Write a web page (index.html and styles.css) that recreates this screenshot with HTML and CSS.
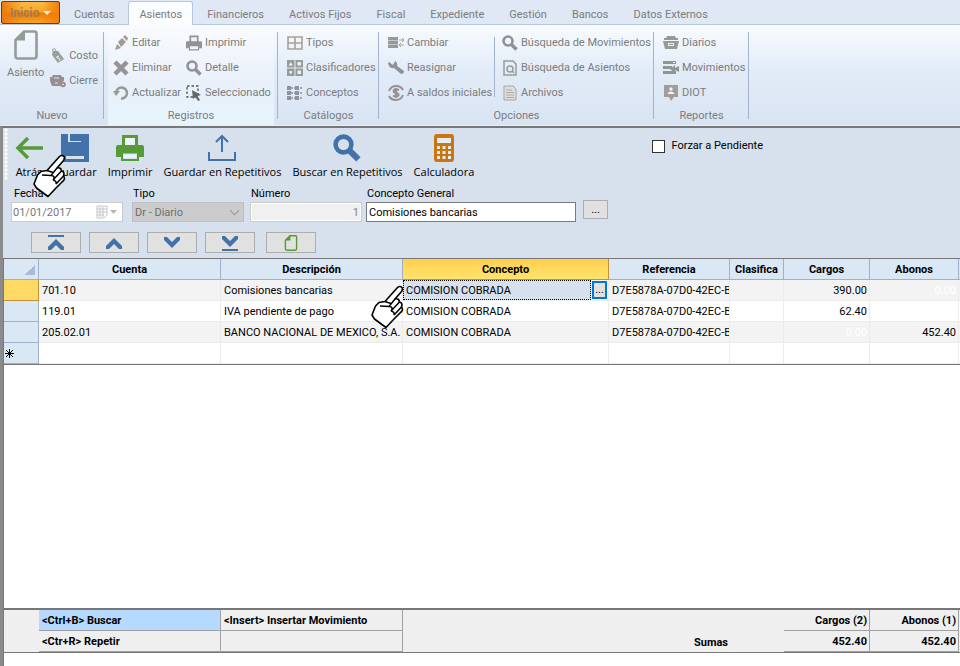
FILE: index.html
```
<!DOCTYPE html>
<html lang="es">
  <head>
    <meta charset="UTF-8" />
    <meta name="viewport" content="width=device-width, initial-scale=1.0" />
    <title>Asientos</title>
    <link rel="stylesheet" href="styles.css">
  </head>
  <body>
    <svg class="defs" aria-hidden="true">
      <symbol id="search" viewBox="0 0 16 16"><circle cx="6" cy="6" r="4.500" fill="none" stroke="currentColor" stroke-width="2.600"/><path d="M9 9L14.500 14.500" stroke="currentColor" stroke-width="3.500"/></symbol>
      <symbol id="sheet" viewBox="0 0 24 30"><path d="M10 1.500H20.500Q22.500 1.500 22.500 3.500V26Q22.500 28.500 20 28.500H4Q1.500 28.500 1.500 26V10Z" fill="none" stroke="currentColor" stroke-width="2.600"/><path d="M11 1V10.500H1Z" fill="currentColor"/></symbol>
      <symbol id="printer" viewBox="0 0 28 28"><path d="M6 1H22V11H26Q28 11 28 13V23H23V18H5V23H0V13Q0 11 2 11H6Z" fill="currentColor"/><path d="M9 4H19V11H9ZM8 20.500H20V24H8Z" fill="#eef3f9"/><path d="M6 18.500H22V26H6Z" fill="none" stroke="currentColor" stroke-width="2"/></symbol>
      <symbol id="hand" viewBox="0 0 34 44"><path d="M14 16.500L26.500 2.500Q29 .5 31 2.500Q32 4.500 30.500 6.500L24 14Q28 13 28.500 17Q32 18 30.500 22Q33 25 29 28L23 34L15 42.500L3.500 34L1 30L4.500 21L8 17.500Z" fill="#fff" stroke="#000" stroke-width="1.600" stroke-linejoin="round"/><path d="M9 21L18 21.500L24 14M18 21.500Q23 22 20 26L28.500 17M20 26Q24 27 23 30L30.500 22M14 16.500L20 18.500" fill="none" stroke="#000" stroke-width="1.500"/></symbol>
    </svg>

    <nav class="tabs">
      <button class="start">Inicio <span class="arrow"></span></button>
      <a class="tab" href="#">Cuentas</a>
      <a class="tab active" href="#">Asientos</a>
      <a class="tab" href="#">Financieros</a>
      <a class="tab" href="#">Activos Fijos</a>
      <a class="tab" href="#">Fiscal</a>
      <a class="tab" href="#">Expediente</a>
      <a class="tab" href="#">Gestión</a>
      <a class="tab" href="#">Bancos</a>
      <a class="tab" href="#">Datos Externos</a>
    </nav>

    <div class="ribbon">
      <section class="group nuevo">
        <div class="group-body">
          <button class="big"><svg class="sheet-icon"><use href="#sheet"/></svg>Asiento</button>
          <div class="col middle">
            <button class="cmd"><svg viewBox="0 0 16 16"><path d="M3 3L8 3L14 11L8 15L2 7Z" fill="#999f99"/><path d="M4 5Q1 1 4 .8Q7 1 5 5" fill="none" stroke="#999f99"/><path d="M9 8L6.500 9Q7 11 9 10Q11 11 9 13" fill="none" stroke="#eef3f9"/></svg>Costo</button>
            <button class="cmd"><svg viewBox="0 0 16 16"><path d="M3 2H11L12 4H14V8H0V4H2ZM0 8H13V13H2Z" fill="#988f91"/><path d="M4 5H9M5 10H8" stroke="#e5e9f2"/><circle cx="13" cy="11.500" r="2.800" fill="#988f91"/><circle cx="13" cy="11.500" r=".8" fill="#fff"/></svg>Cierre</button>
          </div>
        </div>
        <h2>Nuevo</h2>
      </section>

      <section class="group registros">
        <div class="group-body">
          <div class="col">
            <button class="cmd"><svg viewBox="0 0 16 16"><path d="M2 15L4 9L8 13ZM5 7L9 3L13 7L8 12ZM10 2L12 0L15 3L14 6Z" fill="#a39a91"/></svg>Editar</button>
            <button class="cmd"><svg viewBox="0 0 16 16"><path d="M2 2L14 14M14 2L2 14" stroke="#969394" stroke-width="4.500"/></svg>Eliminar</button>
            <button class="cmd"><svg viewBox="0 0 16 16"><path d="M3 8A5.500 5.500 0 1 1 8 13.500" fill="none" stroke="#969b96" stroke-width="2.500"/><path d="M0 6H7L3 11Z" fill="#969b96"/></svg>Actualizar</button>
          </div>
          <div class="col">
            <button class="cmd"><svg><use href="#printer"/></svg>Imprimir</button>
            <button class="cmd"><svg><use href="#search"/></svg>Detalle</button>
            <button class="cmd"><svg viewBox="0 0 16 16"><path d="M1 1H12V12H1Z" fill="none" stroke="#555" stroke-width="1.300" stroke-dasharray="2.500 2"/><path d="M6 5L15 10L11.500 11L14 15L12 16L9.500 12L7 14Z" fill="#666"/></svg>Seleccionado</button>
          </div>
        </div>
        <h2>Registros</h2>
      </section>

      <section class="group catalogos">
        <div class="group-body">
          <div class="col">
            <button class="cmd"><svg viewBox="0 0 16 16"><path d="M1 2H15V14H1ZM8 2V14M1 8H15" fill="none" stroke="#aaa195" stroke-width="1.600"/></svg>Tipos</button>
            <button class="cmd"><svg viewBox="0 0 16 16"><path d="M0 0H7.500V7.500H0ZM8.500 0H16V7.500H8.500ZM0 8.500H7.500V16H0ZM8.500 8.500H16V16H8.500Z" fill="#969c98"/><path d="M3.800 2L6 5.500H1.600ZM2.500 11H5V13.500H2.500ZM10.500 10.500H14V14H10.500Z" fill="#edf2f8"/><circle cx="12.200" cy="3.800" r="2" fill="#edf2f8"/></svg>Clasificadores</button>
            <button class="cmd"><svg viewBox="0 0 16 16"><path d="M0 1H4V5H0ZM0 6H4V10H0ZM0 11H4V15H0ZM8 1H12V5H8ZM8 6H12V10H8ZM8 11H12V15H8Z" fill="#8e939b"/><path d="M4 3H16M4 8H16M4 13H16" stroke="#8e939b" stroke-width="1.500" stroke-dasharray="2 1"/></svg>Conceptos</button>
          </div>
        </div>
        <h2>Catálogos</h2>
      </section>

      <section class="group opciones">
        <div class="group-body">
          <div class="col">
            <button class="cmd"><svg viewBox="0 0 16 16"><path d="M0 2H10V5H0ZM0 5.500H10V9H0ZM0 9.500H10V13H0Z" fill="#999"/><path d="M11 5H16M14 3L16 5L14 7M16 10H11M13 8L11 10L13 12" fill="none" stroke="#aaa195"/></svg>Cambiar</button>
            <button class="cmd"><svg viewBox="0 0 16 16"><path d="M1 2L5 5L7 1Q10 3 9 6L16 11Q16 14 13 14L6 8Q1 9 0 3Z" fill="#8e9296"/></svg>Reasignar</button>
            <button class="cmd"><svg viewBox="0 0 16 16"><path d="M1 6Q3 1 8 1Q13 1 15 5M15 10Q13 15 8 15Q3 15 1 11M8 3V13M11 5Q6 3 5.500 6Q6 8 8 8Q11 8 10.500 10.500Q8 12.500 5 10.500" fill="none" stroke="#988f91" stroke-width="2"/></svg>A saldos iniciales</button>
          </div>
          <div class="col inner">
            <button class="cmd"><svg><use href="#search"/></svg>Búsqueda de Movimientos</button>
            <button class="cmd"><svg viewBox="0 0 16 16"><path d="M2 1H11L14 4V15H2Z" fill="none" stroke="#969d99" stroke-width="1.500"/><circle cx="8" cy="9" r="3" fill="none" stroke="#969d99" stroke-width="1.500"/><path d="M10 11L12 13" stroke="#969d99" stroke-width="1.500"/></svg>Búsqueda de Asientos</button>
            <button class="cmd"><svg viewBox="0 0 16 16"><path d="M2 1H11L14 4V15H2Z" fill="#dedede" stroke="#a5a5a5"/><path d="M4 5H10M4 7.500H12M4 10H12M4 12.500H12" stroke="#aaa"/></svg>Archivos</button>
          </div>
        </div>
        <h2>Opciones</h2>
      </section>

      <section class="group reportes">
        <div class="group-body">
          <div class="col">
            <button class="cmd"><svg viewBox="0 0 16 16"><path d="M4 1H12L13 3H15V5H1V3H3ZM0 6H16L14 14H2Z" fill="#969b96"/><path d="M5 8H11V11H5Z" fill="#e9eef5"/><path d="M6 9.500H10" stroke="#969b96"/></svg>Diarios</button>
            <button class="cmd"><svg viewBox="0 0 16 16"><path d="M0 1H13V4H0ZM0 6H9V9H0ZM0 11H13V14H0ZM7 9L12 5V8L16 6V12L12 10V13Z" fill="#909591"/><path d="M10 2.500H12" stroke="#fff"/></svg>Movimientos</button>
            <button class="cmd"><svg viewBox="0 0 16 16"><path d="M1 0H15V12H11L8 16L6 12H1Z" fill="#a09d9b"/><circle cx="8" cy="4" r="1.700" fill="#f1f3f7"/><path d="M4.500 9Q5 6.500 8 6.500Q11 6.500 11.500 9Z" fill="#f1f3f7"/></svg>DIOT</button>
          </div>
        </div>
        <h2>Reportes</h2>
      </section>
    </div>

    <main class="window">
      <svg class="hand hand-save" aria-hidden="true"><use href="#hand"/></svg>
      <div class="toolbar">
        <button class="tool"><svg viewBox="0 0 28 28"><path d="M28 14H3M13 4L3 14L13 24" fill="none" stroke="#559b38" stroke-width="3.500"/></svg>Atrás</button>
        <button class="tool"><svg viewBox="0 0 28 28"><path d="M0 0H28V28H0Z" fill="#4272a8"/><path d="M7 0H9V7H11V0H20V8H7ZM5 22H23V25H5Z" fill="#d7e1ee"/><path d="M11 0H20V7H11Z" fill="#4272a8"/></svg>Guardar</button>
        <button class="tool print"><svg><use href="#printer"/></svg>Imprimir</button>
        <button class="tool"><svg viewBox="0 0 28 28"><path d="M1 18V26H27V18M14 18V2M8 8L14 2L20 8" fill="none" stroke="#4272a8" stroke-width="2"/></svg>Guardar en Repetitivos</button>
        <button class="tool find"><svg><use href="#search"/></svg>Buscar en Repetitivos</button>
        <button class="tool"><svg viewBox="0 0 28 28"><rect x="4" width="20" height="28" rx="3" fill="#c87512"/><path d="M7 4H21V9H7Z" fill="#e9edf2"/><path d="M7 13.500H21M7 18.500H21M7 23.500H21" stroke="#e9edf2" stroke-width="2.800" stroke-dasharray="3 2.500"/></svg>Calculadora</button>
        <label class="check"><input type="checkbox"> Forzar a Pendiente</label>
      </div>

      <form class="fields">
        <div class="field fecha">
          <label for="fecha">Fecha</label>
          <div class="date-box">
            <input id="fecha" type="text" value="01/01/2017" disabled>
            <svg viewBox="0 0 22 14" aria-hidden="true"><path d="M1 1H11V10L8 13H1ZM1 4H11M1 7H11M1 10H8M4 2V12M7 2V12" fill="none" stroke="#c4c4c4"/><path d="M14 5H21L17.500 9Z" fill="#b5b8b2"/></svg>
          </div>
        </div>
        <div class="field tipo">
          <label for="tipo">Tipo</label>
          <select id="tipo" disabled><option>Dr - Diario</option></select>
        </div>
        <div class="field numero">
          <label for="numero">Número</label>
          <input id="numero" type="text" value="1" disabled>
        </div>
        <div class="field concepto">
          <label for="concepto">Concepto General</label>
          <input id="concepto" type="text" value="Comisiones bancarias">
        </div>
        <button class="more" type="button" aria-label="Buscar concepto">...</button>
      </form>

      <div class="moves">
        <button aria-label="Primero"><svg viewBox="0 0 18 16"><path d="M1 1H17" class="thin"/><path d="M1 15V12L9 4L17 12V15H14L9 10L4 15Z"/></svg></button>
        <button aria-label="Anterior"><svg viewBox="0 0 18 16"><path d="M1 14V11L9 3L17 11V14H14L9 9L4 14Z"/></svg></button>
        <button aria-label="Siguiente"><svg viewBox="0 0 18 16"><path d="M1 2V5L9 13L17 5V2H14L9 7L4 2Z"/></svg></button>
        <button aria-label="Último"><svg viewBox="0 0 18 16"><path d="M1 15H17" class="thin"/><path d="M1 1V4L9 12L17 4V1H14L9 6L4 1Z"/></svg></button>
        <button class="new" aria-label="Nuevo"><svg><use href="#sheet"/></svg></button>
      </div>

      <div class="grid">
        <svg class="hand hand-grid" aria-hidden="true"><use href="#hand"/></svg>
        <table class="entries">
          <colgroup><col class="c-row"><col class="c-cuenta"><col class="c-desc"><col class="c-concepto"><col class="c-ref"><col class="c-clas"><col class="c-cargos"><col class="c-abonos"><col class="c-end"></colgroup>
          <thead>
            <tr><th><span class="corner"></span></th><th>Cuenta</th><th>Descripción</th><th class="current">Concepto</th><th>Referencia</th><th>Clasifica</th><th>Cargos</th><th>Abonos</th><th></th></tr>
          </thead>
          <tbody>
            <tr><th class="picked"></th><td>701.10</td><td>Comisiones bancarias</td><td class="edit"><div><span>COMISION COBRADA</span><button aria-label="Elegir">...</button></div></td><td>D7E5878A-07D0-42EC-B</td><td></td><td class="num">390.00</td><td class="num zero">0.00</td><td></td></tr>
            <tr><th></th><td>119.01</td><td>IVA pendiente de pago</td><td>COMISION COBRADA</td><td>D7E5878A-07D0-42EC-B</td><td></td><td class="num">62.40</td><td></td><td></td></tr>
            <tr><th></th><td>205.02.01</td><td>BANCO NACIONAL DE MEXICO, S.A.</td><td>COMISION COBRADA</td><td>D7E5878A-07D0-42EC-B</td><td></td><td class="num zero">0.00</td><td class="num">452.40</td><td></td></tr>
            <tr><th class="star"><svg viewBox="0 0 9 9"><path d="M4.500 0V9M0 4.500H9M1 1L8 8M8 1L1 8" stroke="#000"/></svg></th><td></td><td></td><td></td><td></td><td></td><td></td><td></td><td></td></tr>
          </tbody>
        </table>
      </div>

      <div class="totals">
        <table>
          <colgroup><col class="c-row"><col class="c-cuenta"><col class="c-desc"><col class="c-concepto"><col class="c-ref"><col class="c-clas"><col class="c-cargos"><col class="c-abonos"><col class="c-end"></colgroup>
          <tbody>
            <tr><td></td><td class="line side hint">&lt;Ctrl+B&gt; Buscar</td><td class="line side">&lt;Insert&gt; Insertar Movimiento</td><td></td><td></td><td></td><td class="line side num">Cargos (2)</td><td class="line side num">Abonos (1)</td><td></td></tr>
            <tr><td></td><td class="line side">&lt;Ctr+R&gt; Repetir</td><td class="line side"></td><td></td><td class="num">Sumas</td><td></td><td class="line side num">452.40</td><td class="line side num">452.40</td><td></td></tr>
          </tbody>
        </table>
      </div>
    </main>
  </body>
</html>
```

FILE: styles.css
```
* {
  margin: 0;
  padding: 0;
  box-sizing: border-box;
}
body {
  display: flex;
  flex-direction: column;
  min-height: 100vh;
  background-color: #dfe8f4;
  font: 11px/14px Roboto, "Liberation Sans", Arial, sans-serif;
  color: #000;
}
button,
input,
select {
  font: inherit;
  color: inherit;
}
svg {
  display: block;
  flex: none;
}
.defs {
  position: absolute;
  width: 0;
  height: 0;
}

/* tabs */
.tabs {
  display: flex;
  gap: 3px;
  height: 25px;
  padding: 1px 0 0 1px;
  border-bottom: 1px solid #b5c6df;
  white-space: nowrap;
}
.start {
  display: flex;
  align-items: center;
  justify-content: center;
  gap: 4px;
  width: 59px;
  height: 23px;
  border: 1px solid #7e3507;
  border-radius: 2px;
  background: linear-gradient(90deg, #ee790b, transparent 35%, transparent 70%, #ef810a), linear-gradient(#fbbc43, #fba527 45%, #ef7908 55%, #f9a51e);
  color: #a57c50;
  font-size: 12px;
  font-weight: bold;
}
.arrow {
  border: 4px solid transparent;
  border-top-color: #fff3d6;
  border-bottom: 0;
}
.tab {
  padding: 6px 10px 0;
  border: 1px solid transparent;
  border-bottom: 0;
  color: #7c7c7c;
  text-decoration: none;
}
.tab.active {
  height: 24px;
  border-color: #b5c6df;
  border-radius: 3px 3px 0 0;
  background-color: #fbfdff;
}

/* ribbon */
.ribbon {
  display: flex;
  height: 101px;
  background: linear-gradient(#f8fbfe, #e2ecf8 45%, #d9e4f3);
  border-bottom: 1px solid #e6eef8;
  color: #7c7c7c;
  white-space: nowrap;
}
.group {
  display: flex;
  flex-direction: column;
  padding-top: 5px;
  background: linear-gradient(#a4b3cd, #a4b3cd) right 7px / 1px 87px no-repeat;
}
.group-body {
  display: flex;
  flex: 1;
  padding-left: 9px;
}
.group h2 {
  height: 16px;
  font-size: 11px;
  font-weight: normal;
  text-align: center;
}
.nuevo {
  width: 104px;
}
.nuevo .group-body {
  padding-left: 7px;
}
.registros {
  width: 174px;
  background: linear-gradient(#a4b3cd, #a4b3cd) right 7px / 1px 87px no-repeat, linear-gradient(#f9fbfe, #e9f0fa 60%, #e5f4fc) center / 166px 100% no-repeat;
}
.catalogos {
  width: 101px;
}
.opciones {
  width: 275px;
}
.reportes {
  width: 95px;
}
.col {
  display: flex;
  flex-direction: column;
}
.middle {
  padding: 13px 0 0 6px;
}
.registros .col:first-child {
  width: 73px;
}
.opciones .col:first-child {
  width: 106px;
}
.inner {
  padding-left: 8px;
  background: linear-gradient(#a4b3cd, #a4b3cd) left 7px / 1px 60px no-repeat;
}
.cmd {
  display: flex;
  align-items: center;
  gap: 3px;
  height: 25px;
  padding-top: 1px;
  border: 0;
  background: none;
}
.cmd svg {
  width: 16px;
  height: 16px;
  color: #909296;
}
.big {
  display: flex;
  flex-direction: column;
  align-items: center;
  gap: 6px;
  height: 62px;
  border: 0;
  background: none;
}
.sheet-icon {
  width: 24px;
  height: 30px;
  color: #959c97;
}

/* window */
.window {
  position: relative;
  display: flex;
  flex: 1;
  flex-direction: column;
  border-top: 2px solid #777;
  border-left: 3px solid #8b8b8b;
  background-color: #d7e1ee;
}
.hand {
  position: absolute;
  width: 34px;
  height: 44px;
}
.hand-save {
  left: 30px;
  top: 26px;
}
.hand-grid {
  left: 367px;
  top: 26px;
}
.toolbar {
  display: flex;
  gap: 1px;
  height: 52px;
  padding: 6px 0 0 7px;
  background: radial-gradient(#fff 1px, transparent 2px) 1px 4px / 4px 4px repeat-y;
  font: 11px/18px "Open Sans", "Noto Sans", sans-serif;
  white-space: nowrap;
}
.tool {
  display: flex;
  flex-direction: column;
  align-items: center;
  gap: 1px;
  padding: 0 5px;
  border: 0;
  background: none;
}
.tool svg {
  width: 28px;
  height: 28px;
}
.print svg {
  color: #559b38;
}
.find svg {
  color: #4272a8;
}
.check {
  display: flex;
  align-items: center;
  gap: 6px;
  height: 24px;
  margin: 0 197px 0 auto;
  font: 11px/14px Roboto, "Liberation Sans", Arial, sans-serif;
}
.check input {
  appearance: none;
  width: 13px;
  height: 13px;
  border: 1px solid #333;
  background-color: #fff;
}
.check input:checked {
  background-color: #4272a8;
}
.fields {
  display: flex;
  align-items: flex-start;
  height: 52px;
  padding: 6px 0 0 8px;
}
.field {
  margin-right: 6px;
}
.field label {
  display: block;
  height: 16px;
  padding-left: 1px;
  line-height: 16px;
}
.field input,
.field select,
.date-box {
  width: 100%;
  height: 20px;
  padding: 0 2px;
  border: 1px solid #ccc;
}
.fecha {
  width: 112px;
  margin-right: 9px;
}
.fecha label {
  padding-left: 3px;
}
.date-box {
  display: flex;
  align-items: center;
  padding: 0 2px 0 1px;
  background-color: #fff;
}
.date-box input {
  flex: 1;
  min-width: 0;
  height: 18px;
  padding: 0;
  border: 0;
  background: none;
  color: #777;
  font-size: 11px;
}
.date-box svg {
  width: 22px;
  height: 14px;
  margin-right: 2px;
}
.tipo {
  position: relative;
  width: 112px;
}
.tipo select {
  appearance: none;
  padding-top: 1px;
  border-color: #bfbfbf;
  background-color: #ccc;
  color: #6d6d6d;
  opacity: 1;
}
.tipo::after {
  content: "";
  position: absolute;
  right: 6px;
  bottom: 8px;
  width: 6px;
  height: 6px;
  border: solid #999;
  border-width: 0 1px 1px 0;
  transform: rotate(45deg);
}
.numero {
  width: 112px;
  margin-right: 4px;
}
.numero input {
  background-color: #f0f0f0;
  box-shadow: inset 0 0 0 1px #fff;
  color: #858585;
  text-align: right;
}
.concepto {
  width: 210px;
  margin-right: 7px;
}
.concepto input {
  border-color: #7a7a7a;
  background-color: #fff;
}
.more {
  width: 25px;
  height: 19px;
  margin-top: 14px;
  border: 1px solid #adadad;
  background-color: #e1e1e1;
}
.moves {
  display: flex;
  gap: 8px;
  height: 26px;
  padding-left: 28px;
}
.moves button {
  display: flex;
  align-items: center;
  justify-content: center;
  width: 50px;
  height: 21px;
  border: 1px solid #adadad;
  background-color: #e1e1e1;
}
.moves svg {
  width: 18px;
  height: 16px;
  fill: #4272a8;
}
.moves .thin {
  stroke: #4272a8;
  stroke-width: 2;
}
.moves .new {
  margin-left: 3px;
}
.moves .new svg {
  width: 14px;
  color: #559b38;
}

/* tables */
.grid {
  position: relative;
  flex: 1;
  border-top: 1px solid #777;
  border-left: 1px solid #777;
  background-color: #fff;
}
table {
  width: 100%;
  border-collapse: separate;
  border-spacing: 0;
  table-layout: fixed;
}
.c-row {
  width: 35px;
}
.c-cuenta,
.c-desc {
  width: 182px;
}
.c-ref {
  width: 121px;
}
.c-clas {
  width: 54px;
}
.c-cargos {
  width: 86px;
}
.c-abonos {
  width: 89px;
}
.c-end {
  width: 1px;
}
th,
td {
  height: 21px;
  padding: 2px 3px 0;
  overflow: hidden;
  white-space: nowrap;
}
.entries {
  border-bottom: 1px solid #777;
}
.entries th {
  border-right: 1px solid #9fb0cb;
  border-bottom: 1px solid #9fb0cb;
  background-color: #dae7f5;
}
.entries td {
  border-right: 1px solid #ececec;
  border-bottom: 1px solid #ececec;
}
.entries tr > :last-child {
  padding: 0;
  border-right: 0;
}
.entries tbody tr:nth-child(odd) td {
  background-color: #f3f3f3;
}
.entries .current {
  border-color: #c59135;
  background: linear-gradient(#ffcf4f, #ffe46c);
}
.entries .picked {
  border-color: #c59135;
  background-color: #ffd965;
}
.corner {
  display: block;
  width: 10px;
  height: 10px;
  margin-left: auto;
  background: linear-gradient(135deg, transparent 50%, #a8bbd7 50%);
}
.star svg {
  width: 9px;
  height: 9px;
}
.entries .star {
  padding: 0 1px;
}
.num {
  text-align: right;
}
.entries .num {
  padding-right: 2px;
}
.entries .zero {
  color: #fff;
}
.entries .edit {
  padding: 0;
}
.edit div {
  display: flex;
  align-items: center;
  height: 20px;
  gap: 1px;
  padding-right: 1px;
}
.edit span {
  flex: 1;
  height: 20px;
  padding: 3px 2px 0;
  border: 1px dotted #000;
  background-color: #d7e1ee;
}
.edit button {
  width: 15px;
  height: 18px;
  border: 2px solid #0078d7;
  background-color: #e1e1e1;
  line-height: 10px;
}
.totals {
  height: 58px;
  border-top: 2px solid #777;
  border-left: 1px solid #777;
  background-color: #fff;
}
.totals table {
  border-bottom: 1px solid #777;
  background-color: #efefef;
  font-weight: bold;
}
.totals .num {
  padding-right: 2px;
}
.line {
  border-bottom: 1px solid #a0a0a0;
}
.side {
  border-right: 1px solid #a0a0a0;
}
.totals td:last-child {
  padding: 0;
}
.hint {
  background-color: #b5d9ff;
}
```
